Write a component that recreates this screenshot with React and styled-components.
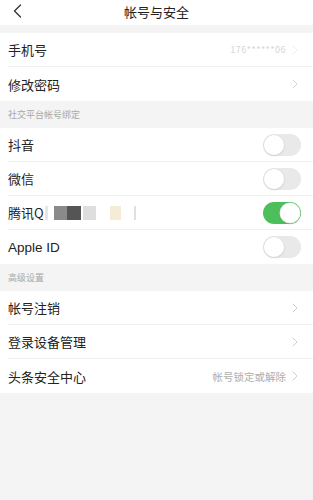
import React from 'react';
import styled, { createGlobalStyle } from 'styled-components';

const GlobalStyle = createGlobalStyle`
  html, body {
    margin: 0;
    padding: 0;
    background: #f4f4f4;
    font-family: "Noto Sans CJK JP", "Noto Sans CJK SC", sans-serif;
    font-weight: 400;
  }
`;

const Chevron = ({ color = '#d0d0d0', size = 10 }) => (
  <svg width={size * 0.6} height={size} viewBox="0 0 6 10" fill="none">
    <path d="M1 1l4 4-4 4" stroke={color} strokeWidth="1" strokeLinecap="round" strokeLinejoin="round" />
  </svg>
);

const Toggle = ({ on }) => (
  <Track on={on ? 1 : 0}>
    <Knob on={on ? 1 : 0} />
  </Track>
);

const rows1 = [
  { label: '手机号', phone: '176******06' },
  { label: '修改密码', arrow: true },
];

const social = [
  { label: '抖音', on: false },
  { label: '微信', on: false },
  { label: '腾讯Q', on: true, redact: true },
  { label: 'Apple ID', on: false, latin: true },
];

const advanced = [
  { label: '帐号注销' },
  { label: '登录设备管理' },
  { label: '头条安全中心', extra: '帐号锁定或解除' },
];

const App = () => (
  <Page lang="zh-CN">
    <GlobalStyle />
    <Header>
      <Back>
        <svg width="9" height="14" viewBox="0 0 9 14" fill="none">
          <path d="M7.5 1L1.5 7l6 6" stroke="#333" strokeWidth="1.3" strokeLinecap="round" strokeLinejoin="round" />
        </svg>
      </Back>
      <Title>帐号与安全</Title>
    </Header>
    <Spacer />
    <Group>
      {rows1.map((r, i) => (
        <Row key={r.label} last={i === rows1.length - 1}>
          <Label>{r.label}</Label>
          <Right>
            {r.phone && <Phone>{r.phone}</Phone>}
            <Chevron color={r.phone ? '#eeeeee' : '#d4d4d4'} />
          </Right>
        </Row>
      ))}
    </Group>
    <SectionTitle>社交平台帐号绑定</SectionTitle>
    <Group>
      {social.map((r, i) => (
        <Row key={r.label} last={i === social.length - 1}>
          <Label latin={r.latin ? 1 : 0}>
            {r.label}
            {r.redact && (
              <Redact>
                <Block w={3} c="#e6e6e6" />
                <Block w={13} c="#8a8a8a" gap={6} />
                <Block w={14} c="#555" />
                <Block w={13} c="#dedede" gap={2} />
                <Block w={11} c="#f4ecd6" gap={14} />
                <Block w={2} c="#e0e0e0" gap={13} />
              </Redact>
            )}
          </Label>
          <Toggle on={r.on} />
        </Row>
      ))}
    </Group>
    <SectionTitle>高级设置</SectionTitle>
    <Group>
      {advanced.map((r, i) => (
        <Row key={r.label} last={i === advanced.length - 1}>
          <Label>{r.label}</Label>
          <Right>
            {r.extra && <Extra>{r.extra}</Extra>}
            <Chevron />
          </Right>
        </Row>
      ))}
    </Group>
  </Page>
);

/* styled-components */
const Page = styled.div`
  width: 313px;
  min-height: 500px;
  background: #f4f4f4;
`;

const Header = styled.div`
  height: 25px;
  background: #fff;
  display: flex;
  align-items: center;
  justify-content: center;
  position: relative;
`;

const Back = styled.div`
  position: absolute;
  left: 13px;
  top: 4px;
  display: flex;
`;

const Title = styled.div`
  font-size: 13px;
  color: #222;
  margin-top: -2px;
`;

const Spacer = styled.div`
  height: 8px;
`;

const Group = styled.div`
  background: #fff;
  padding-left: 8px;
`;

const Row = styled.div`
  height: 34px;
  display: flex;
  align-items: center;
  justify-content: space-between;
  padding-right: 13px;
  box-sizing: border-box;
  border-bottom: ${(p) => (p.last ? 'none' : '1px solid #f0f0f0')};
`;

const Label = styled.div`
  display: flex;
  align-items: center;
  font-size: ${(p) => (p.latin ? '13.5px' : '13px')};
  color: #222;
  font-family: ${(p) => (p.latin ? '"Liberation Sans", Arial, sans-serif' : 'inherit')};
`;

const Right = styled.div`
  display: flex;
  align-items: center;
  gap: 6px;
  margin-right: 2px;
`;

const Phone = styled.span`
  font-size: 9px;
  color: #d6d6d6;
  letter-spacing: 0.5px;
`;

const Extra = styled.span`
  font-size: 10.5px;
  color: #adadad;
`;

const SectionTitle = styled.div`
  height: 27px;
  display: flex;
  align-items: center;
  padding-left: 8px;
  font-size: 9px;
  color: #a8a8a8;
`;

const Redact = styled.span`
  display: flex;
  align-items: center;
  margin-left: 1px;
`;

const Block = styled.span`
  display: inline-block;
  width: ${(p) => p.w}px;
  height: 14px;
  background: ${(p) => p.c};
  margin-left: ${(p) => p.gap || 0}px;
`;

const Track = styled.div`
  width: 38px;
  height: 22px;
  border-radius: 11px;
  box-sizing: border-box;
  background: ${(p) => (p.on ? '#4cbf5a' : '#e9e9e9')};
  position: relative;
  margin-right: -1px;
`;

const Knob = styled.div`
  position: absolute;
  top: 1px;
  left: ${(p) => (p.on ? '17px' : '1px')};
  width: 20px;
  height: 20px;
  border-radius: 50%;
  background: #fff;
  box-shadow: 0 0 0 0.5px #dcdcdc, 0 1px 2px rgba(0, 0, 0, 0.15);
`;

export default App;
